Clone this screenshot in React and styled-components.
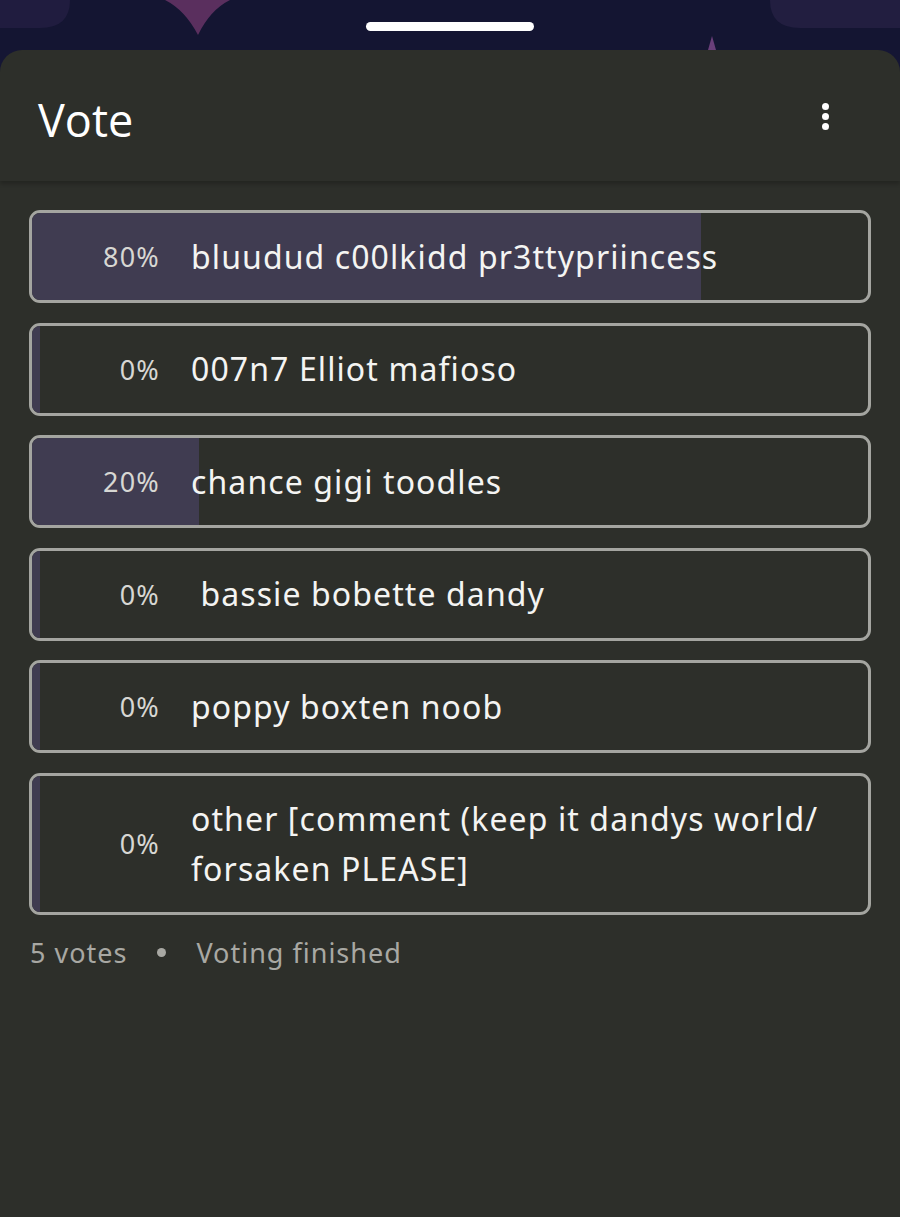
import React from 'react';
import styled, { createGlobalStyle } from 'styled-components';

const GlobalStyle = createGlobalStyle`
  html, body {
    margin: 0;
    padding: 0;
    background: #151634;
  }
  * {
    box-sizing: border-box;
  }
`;

const options = [
  { pct: 80, label: 'bluudud c00lkidd pr3ttypriincess' },
  { pct: 0, label: '007n7 Elliot mafioso' },
  { pct: 20, label: 'chance gigi toodles' },
  { pct: 0, label: '\u00a0bassie bobette dandy' },
  { pct: 0, label: 'poppy boxten noob' },
  { pct: 0, label: 'other [comment (keep it dandys world/ forsaken PLEASE]' },
];

const Page = styled.div`
  height: 1217px;
  display: flex;
  flex-direction: column;
  font-family: 'Noto Sans', Lato, sans-serif;
`;

const Backdrop = styled.div`
  height: 50px;
  position: relative;
  display: flex;
  justify-content: center;
  padding-top: 22px;
  overflow: hidden;

  svg {
    position: absolute;
    inset: 0;
  }
`;

const Handle = styled.div`
  position: relative;
  width: 168px;
  height: 9px;
  border-radius: 5px;
  background: #ffffff;
`;

const Sheet = styled.div`
  flex: 1;
  background: #2d2f2a;
  border-radius: 22px 22px 0 0;
  display: flex;
  flex-direction: column;
`;

const Header = styled.header`
  height: 131px;
  padding: 0 71px 0 38px;
  display: flex;
  align-items: center;
  justify-content: space-between;
  box-shadow: 0 3px 4px rgba(0, 0, 0, 0.22);
`;

const Title = styled.h1`
  margin: 0 0 -8px;
  font-family: 'Open Sans', sans-serif;
  font-weight: 400;
  font-size: 45px;
  color: #ffffff;
`;

const MenuButton = styled.div`
  display: flex;
  flex-direction: column;
  gap: 3px;
  margin-top: 1px;

  span {
    width: 7px;
    height: 7px;
    border-radius: 50%;
    background: #ffffff;
  }
`;

const List = styled.div`
  padding: 29px 29px 0;
  display: flex;
  flex-direction: column;
  gap: 19.5px;
`;

const Option = styled.div`
  position: relative;
  min-height: 93px;
  border: 3px solid #a4a5a0;
  border-radius: 11px;
  overflow: hidden;
  display: flex;
  align-items: center;
  padding: 18px 20px 18px 0;
`;

const Fill = styled.div`
  position: absolute;
  left: 0;
  top: 0;
  bottom: 0;
  min-width: 8px;
  background: #403c51;
`;

const Percent = styled.span`
  position: relative;
  flex: 0 0 128px;
  text-align: right;
  font-size: 27px;
  color: #d7d7d3;
  letter-spacing: 1.2px;
`;

const Label = styled.span`
  position: relative;
  margin-left: 31px;
  font-size: 32px;
  line-height: 50px;
  color: #f4f4f2;
  letter-spacing: 1.1px;
`;

const Footer = styled.div`
  padding: 19px 30px;
  display: flex;
  align-items: center;
  gap: 30px;
  font-size: 27px;
  color: #a8a8a3;
  letter-spacing: 1px;
`;

const Dot = styled.span`
  width: 9px;
  height: 9px;
  border-radius: 50%;
  background: #a8a8a3;
`;

function Scenery() {
  return (
    <svg width="900" height="50" viewBox="0 0 900 50">
      <rect width="900" height="50" fill="#141532" />
      <path d="M0 0 H70 Q70 28 40 28 H0 Z" fill="#201c3f" />
      <path d="M165 0 Q185 10 198 35 Q210 10 230 0 Z" fill="#5a2f5e" />
      <path d="M770 0 H900 V28 H800 Q770 28 770 0 Z" fill="#221e40" />
      <path d="M708 50 L712 36 L716 50 Z" fill="#6a3f7a" />
    </svg>
  );
}

export default function App() {
  return (
    <Page>
      <GlobalStyle />
      <Backdrop>
        <Scenery />
        <Handle />
      </Backdrop>
      <Sheet>
        <Header>
          <Title>Vote</Title>
          <MenuButton>
            <span />
            <span />
            <span />
          </MenuButton>
        </Header>
        <List>
          {options.map((o) => (
            <Option key={o.label}>
              <Fill style={{ width: `${o.pct}%` }} />
              <Percent>{o.pct}%</Percent>
              <Label>{o.label}</Label>
            </Option>
          ))}
        </List>
        <Footer>
          <span>5 votes</span>
          <Dot />
          <span>Voting finished</span>
        </Footer>
      </Sheet>
    </Page>
  );
}
